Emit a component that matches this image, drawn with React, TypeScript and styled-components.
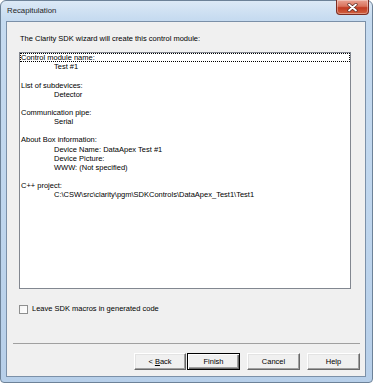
import * as React from "react";
import styled, { createGlobalStyle } from "styled-components";

const GlobalStyle = createGlobalStyle`
	html, body {
		margin: 0;
		padding: 0;
		background: #ffffff;
	}
`;

const Window = styled.div`
	position: relative;
	box-sizing: border-box;
	width: 373px;
	height: 383px;
	display: flex;
	flex-direction: column;
	border: 1px solid #6d8298;
	border-radius: 6px 6px 4px 4px;
	background: linear-gradient(180deg, #dce9f6 0px, #c6dbf0 18px, #bed5ed 60%, #b7cfe9 100%);
	font-family: "Liberation Sans", Arial, sans-serif;
	color: #000;
`;

const TitleBar = styled.div`
	position: relative;
	height: 20px;
	flex: none;
	display: flex;
	align-items: center;
	padding-left: 6px;
`;

const Title = styled.span`
	font-size: 7.8px;
	line-height: 10px;
	color: #1e1e1e;
`;

const CloseButton = styled.div`
	position: absolute;
	top: -1px;
	right: 3px;
	width: 33px;
	height: 15px;
	box-sizing: border-box;
	border: 1px solid #7c2d22;
	border-top: none;
	border-radius: 0 0 4px 4px;
	background: linear-gradient(180deg, #eaa292 0%, #d9735c 45%, #c23b22 55%, #d0603f 100%);
	box-shadow: inset 0 0 0 1px rgba(255, 255, 255, 0.35);
	display: flex;
	align-items: center;
	justify-content: center;
`;

const Client = styled.div`
	flex: 1;
	margin: 0 6px 5px 5px;
	box-sizing: border-box;
	border: 1px solid #7b90a8;
	background: #f0f0f0;
	display: flex;
	flex-direction: column;
	font-size: 7.5px;
`;

const Intro = styled.div`
	margin: 12px 0 0 13px;
	line-height: 9.15px;
	white-space: nowrap;
`;

const ListBox = styled.div`
	margin: 9px 0 0 12px;
	width: 332px;
	height: 237px;
	box-sizing: border-box;
	border: 1px solid #828790;
	background: #ffffff;
	overflow: hidden;
`;

const Row = styled.div<{ $indent?: boolean; $focused?: boolean }>`
	height: 9.15px;
	line-height: 9.15px;
	padding-left: ${(p) => (p.$indent ? "34px" : "1px")};
	white-space: nowrap;
	outline: ${(p) => (p.$focused ? "1px dotted #000" : "none")};
	outline-offset: -1px;
`;

const CheckRow = styled.label`
	margin: 15px 0 0 12px;
	height: 10px;
	display: flex;
	align-items: center;
	gap: 4px;
	line-height: 10px;
`;

const CheckBox = styled.span`
	width: 9px;
	height: 9px;
	box-sizing: border-box;
	border: 1px solid #8e8f8f;
	background: linear-gradient(135deg, #f4f4f4, #ffffff);
	flex: none;
`;

const Separator = styled.div`
	margin: 29px 5px 0 6px;
	height: 1px;
	background: #a0a0a0;
`;

const ButtonRow = styled.div`
	margin-top: 9px;
	padding-right: 5px;
	display: flex;
	justify-content: flex-end;
	gap: 7px;
`;

const ButtonPair = styled.div`
	display: flex;
	gap: 1px;
`;

const Button = styled.div<{ $default?: boolean; $width?: number }>`
	width: ${(p) => p.$width || 53}px;
	height: 17px;
	box-sizing: border-box;
	display: flex;
	align-items: center;
	justify-content: center;
	background: #f0f0f0;
	font-size: 7.5px;
	border: 1px solid;
	border-color: ${(p) => (p.$default ? "#000" : "#ffffff #696969 #696969 #ffffff")};
	box-shadow: ${(p) =>
		p.$default
			? "inset 1px 1px #ffffff, inset -1px -1px #696969, inset -2px -2px #a0a0a0"
			: "inset -1px -1px #a0a0a0, inset 1px 1px #e3e3e3"};

	u {
		text-decoration: underline;
		text-underline-offset: 1px;
	}
`;

const lines: { text: string; indent?: boolean }[] = [
	{ text: "Control module name:" },
	{ text: "Test #1", indent: true },
	{ text: "" },
	{ text: "List of subdevices:" },
	{ text: "Detector", indent: true },
	{ text: "" },
	{ text: "Communication pipe:" },
	{ text: "Serial", indent: true },
	{ text: "" },
	{ text: "About Box information:" },
	{ text: "Device Name: DataApex Test #1", indent: true },
	{ text: "Device Picture:", indent: true },
	{ text: "WWW: (Not specified)", indent: true },
	{ text: "" },
	{ text: "C++ project:" },
	{ text: "C:\\CSW\\src\\clarity\\pgm\\SDKControls\\DataApex_Test1\\Test1", indent: true },
];

export default function App() {
	return (
		<>
			<GlobalStyle />
			<Window>
				<TitleBar>
					<Title>Recapitulation</Title>
					<CloseButton>
						<svg width="11" height="9" viewBox="0 0 11 9">
							<path d="M2 1.5 L9 7.5 M9 1.5 L2 7.5" stroke="#5a2a22" strokeWidth="3.2" strokeLinecap="round" />
							<path d="M2 1.5 L9 7.5 M9 1.5 L2 7.5" stroke="#ffffff" strokeWidth="1.8" strokeLinecap="round" />
						</svg>
					</CloseButton>
				</TitleBar>
				<Client>
					<Intro>The Clarity SDK wizard will create this control module:</Intro>
					<ListBox>
						{lines.map((l, i) => (
							<Row key={i} $indent={l.indent} $focused={i === 0}>
								{l.text}
							</Row>
						))}
					</ListBox>
					<CheckRow>
						<CheckBox />
						<span>Leave SDK macros in generated code</span>
					</CheckRow>
					<Separator />
					<ButtonRow>
						<ButtonPair>
							<Button $width={52}>
								&lt;&nbsp;<u>B</u>ack
							</Button>
							<Button $default>Finish</Button>
						</ButtonPair>
						<Button>Cancel</Button>
						<Button>Help</Button>
					</ButtonRow>
				</Client>
			</Window>
		</>
	);
}
